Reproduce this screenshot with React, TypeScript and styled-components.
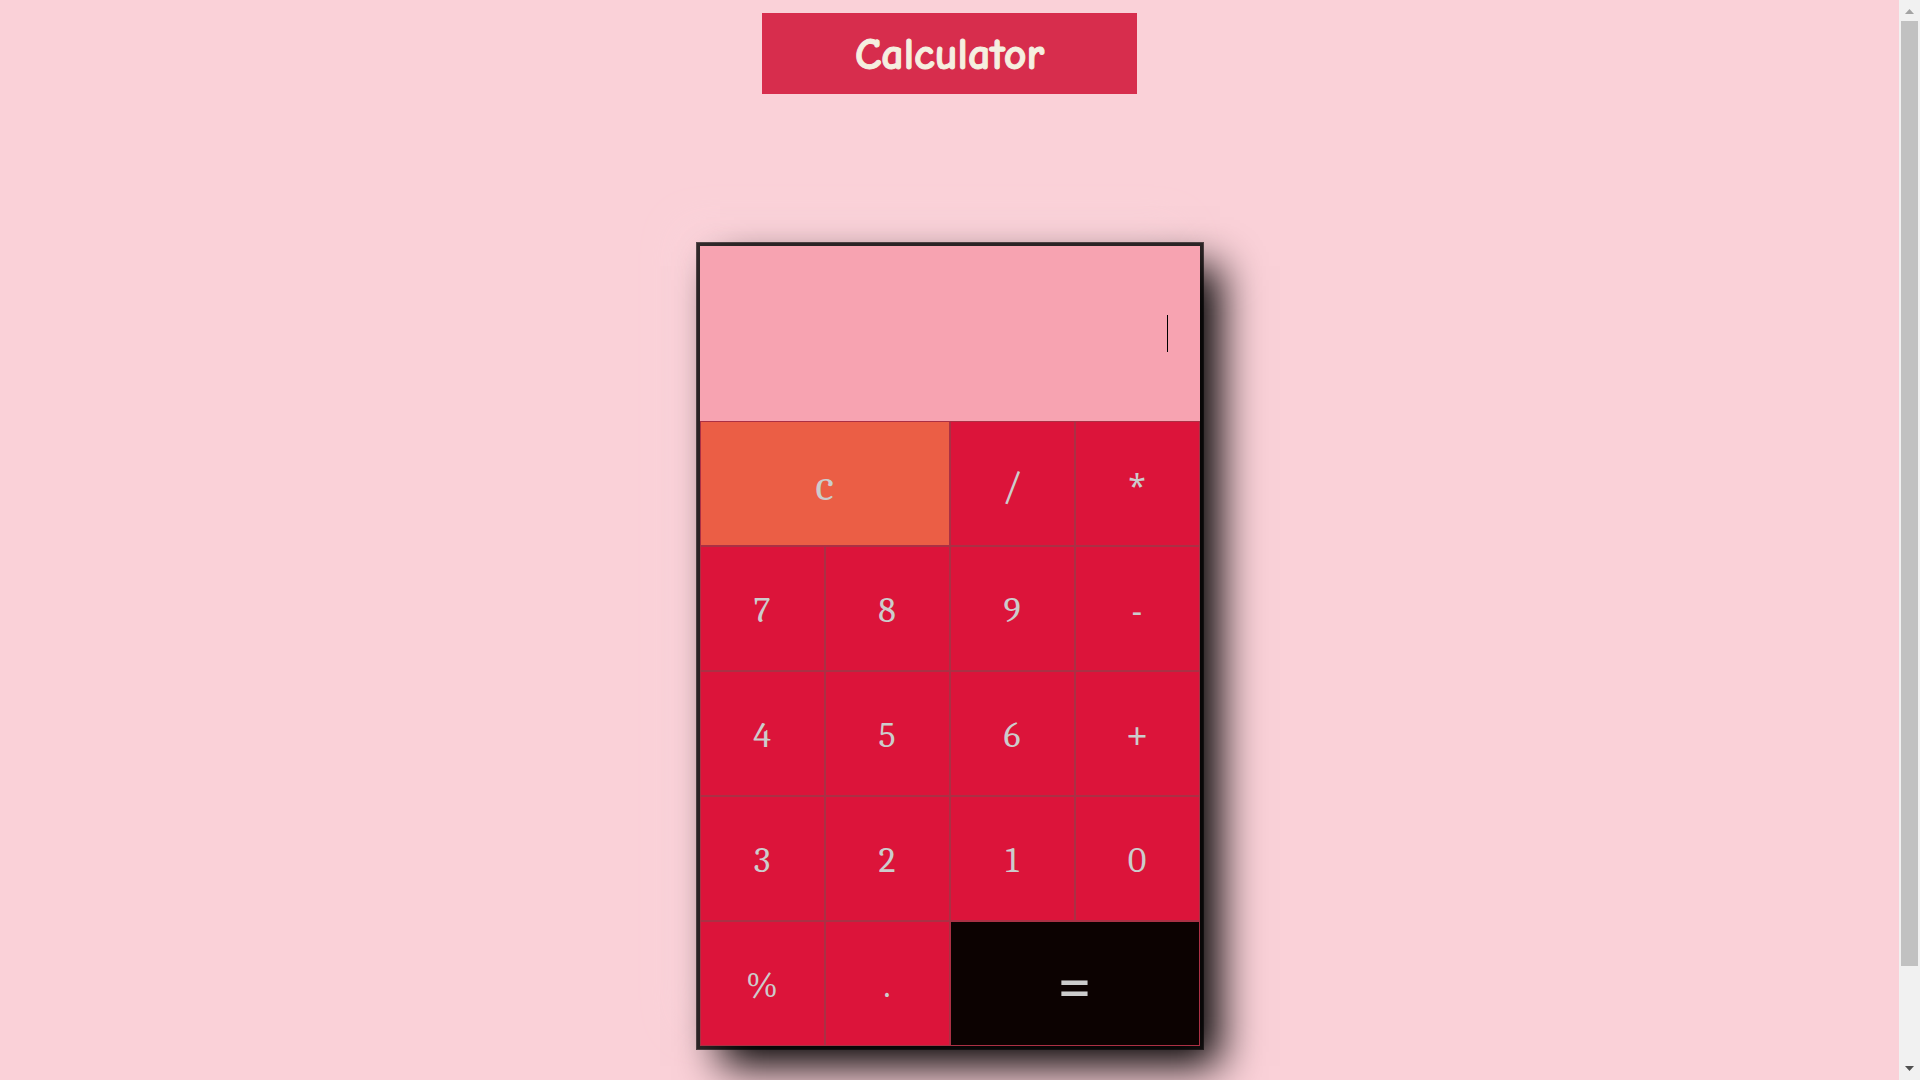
import React, { useState } from "react";
import styled, { createGlobalStyle } from "styled-components";

const GlobalStyle = createGlobalStyle`
  *, *::before, *::after { box-sizing: border-box; }
  body { margin: 0; background: #fad1d8; }
`;

const Frame = styled.div`
  display: flex;
  height: 100vh;
  background: #fad1d8;
`;

const Page = styled.main`
  flex: 1;
  min-width: 0;
  display: flex;
  flex-direction: column;
  align-items: center;
  gap: 152px;
  padding: 13px 0 140px;
  overflow-y: auto;
  scrollbar-width: none;
`;

const Title = styled.h1`
  flex: none;
  margin: 0;
  padding: 14px 0 11px;
  width: 375px;
  max-width: 100%;
  background: #d72d4d;
  color: #f5efe0;
  font: bold 44px/56px "Comic Sans MS", "Comic Neue", Lato, sans-serif;
  -webkit-text-stroke: 1px #f5efe0;
  text-align: center;
`;

const Body = styled.section`
  flex: none;
  width: 500px;
  max-width: 100%;
  box-shadow:
    0 0 0 3px rgba(0, 0, 0, 0.43),
    0 0 0 4px rgba(0, 0, 0, 0.65),
    20px 20px 40px #000,
    -20px -20px 40px #fbd4db;
`;

const Display = styled.div`
  display: flex;
  align-items: center;
  height: 175px;
  padding-right: 32px;
  background: #f7a3b1;
`;

const Readout = styled.input`
  flex: 1;
  min-width: 0;
  height: 100%;
  padding: 0 0 0 32px;
  border: 0;
  outline: 0;
  background: transparent;
  color: #000;
  caret-color: transparent;
  font: 32px/37px Cambria, "DejaVu Serif Condensed", "DejaVu Serif", serif;
  text-align: right;
`;

const Caret = styled.span`
  height: 37px;
  border-left: 1px solid #000;
`;

const Keys = styled.div`
  display: grid;
  grid-template-columns: repeat(4, 1fr);
  grid-auto-rows: 125px;
`;

const Key = styled.button<{ $wide?: boolean; $fill?: string; $size?: number; $sans?: boolean }>`
  grid-column: span ${(p) => (p.$wide ? 2 : 1)};
  padding: 4px 0 0;
  border: 1px solid #ab3044;
  border-radius: 0;
  background: ${(p) => p.$fill ?? "#dc143a"};
  color: #cccccc;
  font-family: ${(p) =>
    p.$sans
      ? '"Noto Sans", "Open Sans", sans-serif'
      : 'Cambria, "DejaVu Serif Condensed", "DejaVu Serif", serif'};
  font-size: ${(p) => p.$size ?? 36}px;
  font-weight: ${(p) => (p.$wide && p.$sans ? 500 : 400)};
  line-height: 40px;
  cursor: pointer;
`;

const Scrollbar = styled.div`
  display: flex;
  flex-direction: column;
  width: 21px;
  background: #f1f1f1;
`;

const Arrow = styled.svg`
  display: block;
  width: 21px;
  height: 21px;
`;

const Track = styled.div`
  flex: 1;
  padding: 0 2px;
`;

const Thumb = styled.div`
  height: 91%;
  background: #c1c1c1;
`;

type KeySpec = { label: string; wide?: boolean; fill?: string; size?: number; sans?: boolean };

const digits = (labels: string): KeySpec[] => labels.split("").map((label) => ({ label }));

const operator = (label: string): KeySpec => ({ label, size: 32, sans: true });

const keys: KeySpec[] = [
  { label: "c", wide: true, fill: "#eb5e45", size: 44 },
  { label: "/", size: 40 },
  operator("*"),
  ...digits("789"),
  operator("-"),
  ...digits("456"),
  { label: "+", size: 36, sans: true },
  ...digits("3210%."),
  { label: "=", wide: true, fill: "#0c0201", size: 56, sans: true },
];

const symbols = ["+", "-", "*", "/", "%"];

function evaluate(expression: string): string {
  const tokens = expression.match(/\d*\.?\d+|[-+*/%]/g) ?? [];
  const stack: number[] = [];
  let pending = "+";
  for (const token of tokens) {
    if (symbols.includes(token)) {
      pending = token;
      continue;
    }
    const value = Number(token);
    if (pending === "+") stack.push(value);
    else if (pending === "-") stack.push(-value);
    else {
      const left = stack.pop() ?? 0;
      stack.push(pending === "*" ? left * value : pending === "/" ? left / value : left % value);
    }
  }
  return String(stack.reduce((sum, n) => sum + n, 0));
}

export default function App() {
  const [value, setValue] = useState("");

  const press = (label: string) => {
    if (label === "c") setValue("");
    else if (label === "=") setValue(evaluate(value));
    else setValue(value + label);
  };

  return (
    <Frame>
      <GlobalStyle />
      <Page>
        <Title>Calculator</Title>
        <Body>
          <Display>
            <Readout
              type="text"
              aria-label="Result"
              value={value}
              onChange={(e) => setValue(e.target.value)}
            />
            <Caret />
          </Display>
          <Keys>
            {keys.map(({ label, wide, fill, size, sans }) => (
              <Key
                key={label}
                type="button"
                $wide={wide}
                $fill={fill}
                $size={size}
                $sans={sans}
                onClick={() => press(label)}
              >
                {label}
              </Key>
            ))}
          </Keys>
        </Body>
      </Page>
      <Scrollbar aria-hidden="true">
        <Arrow viewBox="0 0 21 21">
          <path d="M6 14 L10.5 9 L15 14 Z" fill="#a3a3a3" />
        </Arrow>
        <Track>
          <Thumb />
        </Track>
        <Arrow viewBox="0 0 21 21">
          <path d="M6 7 L10.5 12 L15 7 Z" fill="#505050" />
        </Arrow>
      </Scrollbar>
    </Frame>
  );
}
